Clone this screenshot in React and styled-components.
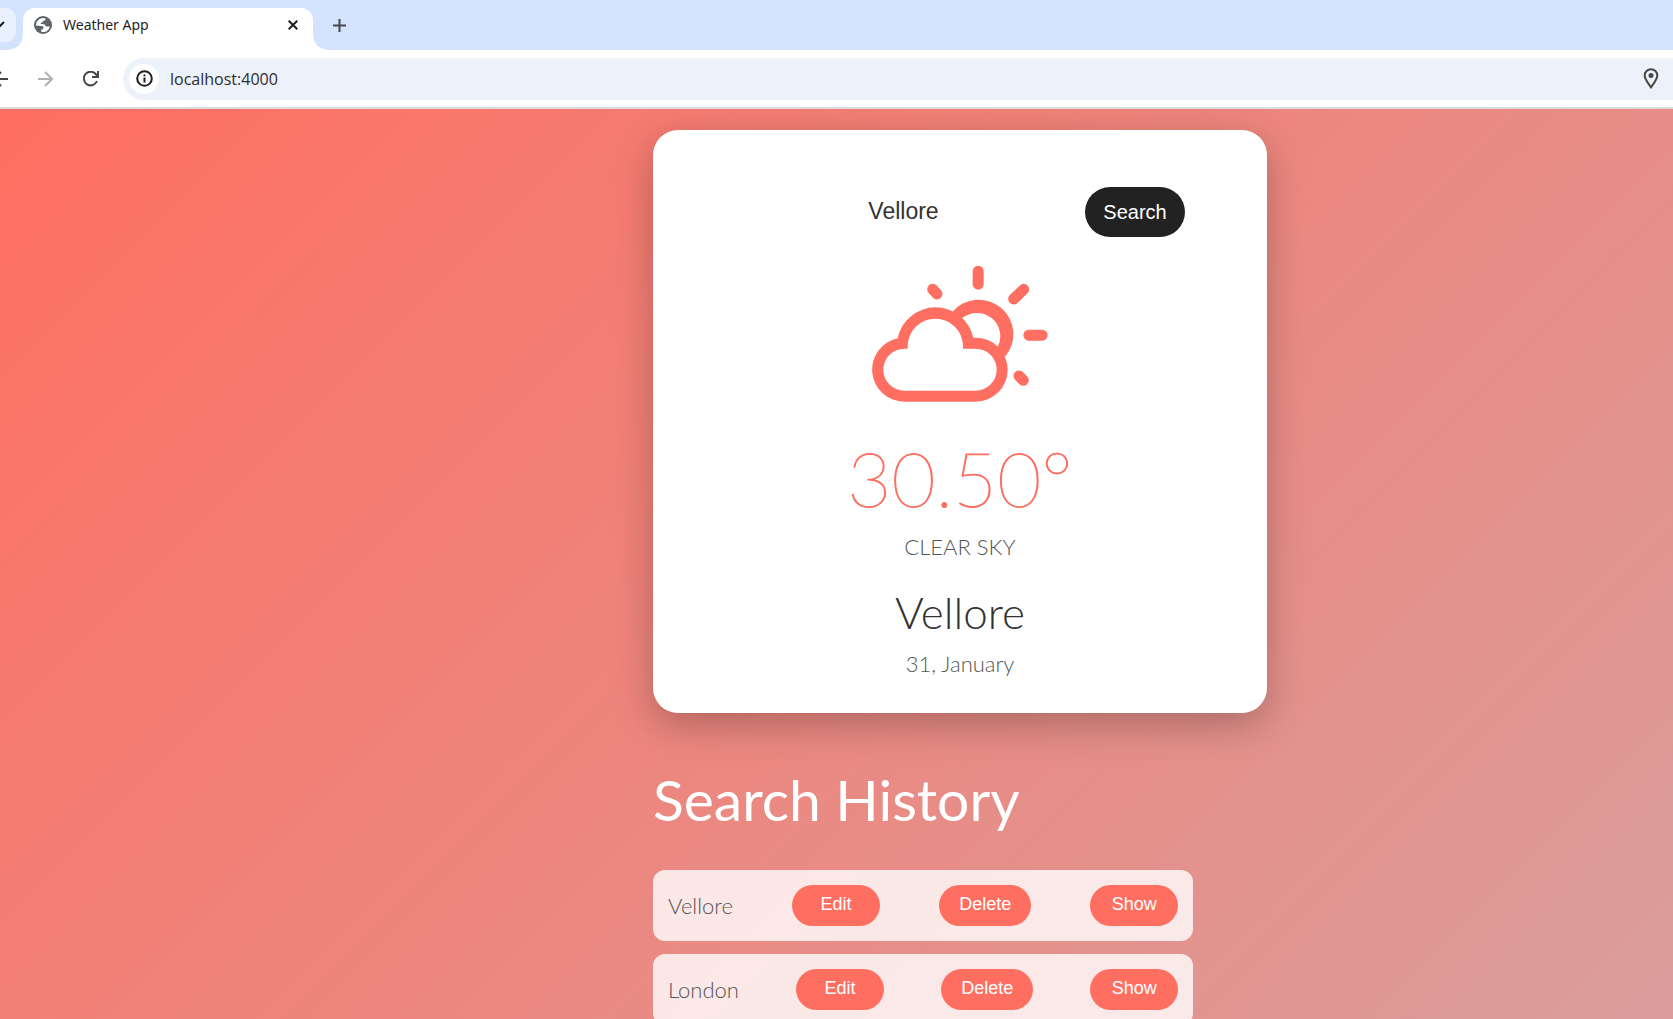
import React, { useState } from "react";
import styled, { createGlobalStyle } from "styled-components";

const GlobalStyle = createGlobalStyle`
  *, *::before, *::after { box-sizing: border-box; }
  body { margin: 0; }
  button, input { font: inherit; border: 0; outline: 0; margin: 0; }
  button { cursor: pointer; }
  svg { display: block; flex: none; }
`;

const Window = styled.div`
  display: flex;
  flex-direction: column;
  height: 100vh;
  overflow: hidden;
`;

/* Browser frame */

const TabStrip = styled.div`
  display: flex;
  flex: none;
  align-items: flex-start;
  height: 50px;
  padding-top: 8px;
  background: #d3e3fd;
  font-family: "Noto Sans", "Open Sans", sans-serif;
`;

const TabSearch = styled.button`
  display: flex;
  align-items: center;
  width: 16px;
  height: 34px;
  margin-right: 7px;
  padding: 0;
  border-radius: 0 11px 11px 0;
  background: #e9f1fe;
  color: #1f1f1f;
`;

const Tab = styled.div`
  position: relative;
  display: flex;
  align-items: center;
  width: 290px;
  height: 42px;
  padding: 0 12px 8px 11px;
  border-radius: 12px 12px 0 0;
  background: #fff;
  color: #1f1f1f;

  &::before,
  &::after {
    content: "";
    position: absolute;
    bottom: 0;
    width: 14px;
    height: 14px;
  }
  &::before {
    right: 100%;
    background: radial-gradient(circle at 0 0, transparent 13px, #fff 14px);
  }
  &::after {
    left: 100%;
    background: radial-gradient(circle at 100% 0, transparent 13px, #fff 14px);
  }
`;

const TabTitle = styled.span`
  flex: 1;
  margin-left: 11px;
  font-size: 14px;
  line-height: 20px;
`;

const IconButton = styled.button`
  display: flex;
  align-items: center;
  justify-content: center;
  height: 34px;
  padding: 0;
  background: transparent;
  color: ${({ $muted }) => ($muted ? "#b1b1b1" : "#474747")};
`;

const TabClose = styled(IconButton)`
  width: 16px;
  color: #1f1f1f;
`;

const NewTab = styled(IconButton)`
  width: 34px;
  margin-left: 9px;
`;

const Toolbar = styled.div`
  display: flex;
  flex: none;
  align-items: center;
  height: 59px;
  border-bottom: 2px solid #dadcde;
  background: #fff;
`;

const NavButtons = styled.div`
  display: flex;
  gap: 30px;
  width: 123px;
`;

const AddressBar = styled.div`
  display: flex;
  flex: 1;
  align-items: center;
  height: 42px;
  padding: 0 14px 0 6px;
  border-radius: 21px 0 0 21px;
  background: #ecf1fa;
`;

const SiteInfo = styled(IconButton)`
  width: 30px;
  height: 30px;
  border-radius: 50%;
  background: #fff;
  color: #1f1f1f;
`;

const Address = styled.input`
  flex: 1;
  min-width: 0;
  margin-left: 11px;
  padding: 0;
  background: transparent;
  color: #2c2d30;
  font-family: "Open Sans", "Noto Sans", sans-serif;
  font-size: 16px;
  line-height: 24px;
`;

/* Weather page */

const Page = styled.main`
  display: grid;
  flex: 1;
  grid-template-columns: 653fr 614fr 406fr;
  align-content: start;
  min-height: 0;
  padding-top: 21px;
  overflow: hidden;
  background: linear-gradient(135deg, #ff6f61 0%, #d4a5a5 116%);
  color: #333;
  font-family: Lato, "Open Sans", sans-serif;
`;

const Content = styled.div`
  grid-column: 2;
`;

const Card = styled.section`
  display: flex;
  flex-direction: column;
  align-items: center;
  padding: 57px 82px 33px;
  border-radius: 25px;
  background: #fff;
  box-shadow: 0 12px 38px rgba(0, 0, 0, 0.25);
`;

const SearchForm = styled.form`
  display: flex;
  gap: 13px;
  width: 100%;
`;

const CityInput = styled.input`
  flex: 1;
  min-width: 0;
  height: 50px;
  padding: 0 12px 2px;
  background: transparent;
  color: #333;
  font-family: "Liberation Sans", Arial, sans-serif;
  font-size: 23px;
  text-align: center;
`;

const SearchButton = styled.button`
  width: 100px;
  height: 50px;
  padding: 0;
  border-radius: 25px;
  background: #222;
  color: #fff;
  font-family: "Liberation Sans", Arial, sans-serif;
  font-size: 20px;
`;

const WeatherIcon = styled.svg`
  width: 180px;
  height: 140px;
  margin-top: 26px;
  color: #ff6f61;
`;

const Temperature = styled.p`
  margin: 27px 0 0;
  color: #ff6f61;
  font-size: 76px;
  font-weight: 200;
  line-height: 96px;
  -webkit-text-stroke: 1px currentColor;
`;

const Condition = styled.p`
  margin: 5px 0 0;
  color: #555;
  font-size: 22px;
  font-weight: 300;
  line-height: 32px;
  text-transform: uppercase;
`;

const City = styled.h1`
  margin: 21px 0 0;
  font-size: 44px;
  font-weight: 300;
  line-height: 56px;
`;

const Day = styled.p`
  margin: 8px 0 0;
  color: #555;
  font-size: 22px;
  font-weight: 300;
  line-height: 32px;
`;

const HistoryTitle = styled.h2`
  margin: 46px 0 31px;
  color: #fff;
  font-size: 57px;
  font-weight: 400;
  line-height: 80px;
  white-space: nowrap;
`;

const HistoryList = styled.ul`
  display: flex;
  flex-direction: column;
  gap: 13px;
  width: 88%;
  margin: 0;
  padding: 0;
  list-style: none;
`;

const HistoryRow = styled.li`
  display: flex;
  align-items: center;
  justify-content: space-between;
  padding: 15px;
  border-radius: 12px;
  background: rgba(255, 255, 255, 0.8);
`;

const HistoryCity = styled.span`
  color: #555;
  font-size: 22px;
  font-weight: 300;
  line-height: 32px;
`;

const HistoryButton = styled.button`
  min-width: 88px;
  height: 41px;
  padding: 0 20px 2px;
  border-radius: 21px;
  background: #ff6f61;
  color: #fff;
  font-family: "Liberation Sans", Arial, sans-serif;
  font-size: 18px;
`;

const places = ["Vellore", "London"];
const actions = ["Edit", "Delete", "Show"];

function Browser() {
  return (
    <>
      <TabStrip>
        <TabSearch aria-label="Search tabs">
          <svg width="6" height="8" viewBox="0 0 6 8" fill="none" stroke="currentColor" strokeWidth="2">
            <path d="M-4 1 L-0.5 5.5 L4 1" />
          </svg>
        </TabSearch>
        <Tab>
          <svg width="18" height="18" viewBox="0 0 18 18">
            <circle cx="9" cy="9" r="9" fill="#5f6368" />
            <path
              d="M9.5 2 L11.5 2.4 C11.6 4 11 4.6 9.6 4.7 C8.8 4.8 8.9 6.2 8 6.5 C7.4 6.7 6.6 6.5 6.6 7.6 C6.8 8.5 9.6 7.8 10.8 8.6 C11.6 9.2 11.2 10.4 12.4 10.5 L15.8 10.4 C15.2 13.6 12.4 16 9 16 C8.4 16 7.6 15.9 7.2 15.8 L7.2 13.8 C8.6 13.7 9.6 13 9.5 11.6 C9.4 10.3 8.4 9.9 7 9.9 L2.1 9.6 C1.7 6 4.6 2.2 9.5 2 Z"
              fill="#fff"
            />
          </svg>
          <TabTitle>Weather App</TabTitle>
          <TabClose aria-label="Close tab">
            <svg width="10" height="10" viewBox="0 0 10 10" stroke="currentColor" strokeWidth="2">
              <path d="M0.7 0.7 L9.3 9.3 M9.3 0.7 L0.7 9.3" />
            </svg>
          </TabClose>
        </Tab>
        <NewTab aria-label="New tab">
          <svg width="13" height="13" viewBox="0 0 13 13" stroke="currentColor" strokeWidth="2">
            <path d="M6.5 0 V13 M0 6.5 H13" />
          </svg>
        </NewTab>
      </TabStrip>
      <Toolbar>
        <NavButtons>
          <IconButton aria-label="Back">
            <svg width="8" height="16" viewBox="0 0 8 16" fill="none" stroke="currentColor" strokeWidth="2">
              <path d="M-7 8 H8 M1 1 L-6 8 L1 15" />
            </svg>
          </IconButton>
          <IconButton aria-label="Forward" $muted>
            <svg width="15" height="16" viewBox="0 0 15 16" fill="none" stroke="currentColor" strokeWidth="2">
              <path d="M0 8 H14 M7 1 L14 8 L7 15" />
            </svg>
          </IconButton>
          <IconButton aria-label="Reload">
            <svg width="16" height="16" viewBox="0 0 16 16" fill="none" stroke="currentColor" strokeWidth="2">
              <path d="M14 10 A6.8 6.8 0 1 1 13.2 3.6 L15 5.6 M15 0 V6 H9" />
            </svg>
          </IconButton>
        </NavButtons>
        <AddressBar>
          <SiteInfo aria-label="Site information">
            <svg width="17" height="17" viewBox="0 0 17 17" fill="none" stroke="currentColor" strokeWidth="2">
              <circle cx="8.5" cy="8.5" r="7.3" />
              <path d="M8.5 7.5 V12.5 M8.5 4.5 V6.3" />
            </svg>
          </SiteInfo>
          <Address aria-label="Address" defaultValue="localhost:4000" spellCheck={false} />
          <IconButton aria-label="Location access">
            <svg width="16" height="21" viewBox="0 0 16 21" fill="none" stroke="currentColor" strokeWidth="2">
              <path d="M8 19.3 C4.5 14.5 1.7 11 1.7 7.5 A6.3 6.3 0 0 1 14.3 7.5 C14.3 11 11.5 14.5 8 19.3 Z" />
              <circle cx="8" cy="7.5" r="2.5" fill="currentColor" stroke="none" />
            </svg>
          </IconButton>
        </AddressBar>
      </Toolbar>
    </>
  );
}

function CloudSun() {
  return (
    <WeatherIcon viewBox="120 40 540 420" role="img" aria-label="Partly cloudy">
      <g fill="currentColor">
        <path
          fillRule="evenodd"
          d="M223 456 A96 96 0 0 1 203 266 A116 116 0 0 1 430 264 H437 A96 96 0 0 1 437 456 Z M223 423 H437 A63 63 0 0 0 437 297 H399 V290 A83 83 0 0 0 233 290 V297 H223 A63 63 0 0 0 223 423 Z"
        />
        <path d="M368 186 A103 103 0 0 1 525 321 L503 292 A70 70 0 0 0 396 206 Z" />
      </g>
      <path
        stroke="currentColor"
        strokeWidth="33"
        strokeLinecap="round"
        d="M444.5 64.5 V103.5 M596.5 256.5 H636.5 M581 119 L551 148 M308 119 L321 133 M567 379 L580 392"
      />
    </WeatherIcon>
  );
}

export default function App() {
  const [city, setCity] = useState("Vellore");

  return (
    <Window>
      <GlobalStyle />
      <Browser />
      <Page>
        <Content>
          <Card>
            <SearchForm onSubmit={(event) => event.preventDefault()}>
              <CityInput aria-label="City" value={city} onChange={(event) => setCity(event.target.value)} />
              <SearchButton type="submit">Search</SearchButton>
            </SearchForm>
            <CloudSun />
            <Temperature>30.50°</Temperature>
            <Condition>Clear sky</Condition>
            <City>Vellore</City>
            <Day>31, January</Day>
          </Card>
          <HistoryTitle>Search History</HistoryTitle>
          <HistoryList>
            {places.map((place) => (
              <HistoryRow key={place}>
                <HistoryCity>{place}</HistoryCity>
                {actions.map((action) => (
                  <HistoryButton key={action} type="button">
                    {action}
                  </HistoryButton>
                ))}
              </HistoryRow>
            ))}
          </HistoryList>
        </Content>
      </Page>
    </Window>
  );
}
